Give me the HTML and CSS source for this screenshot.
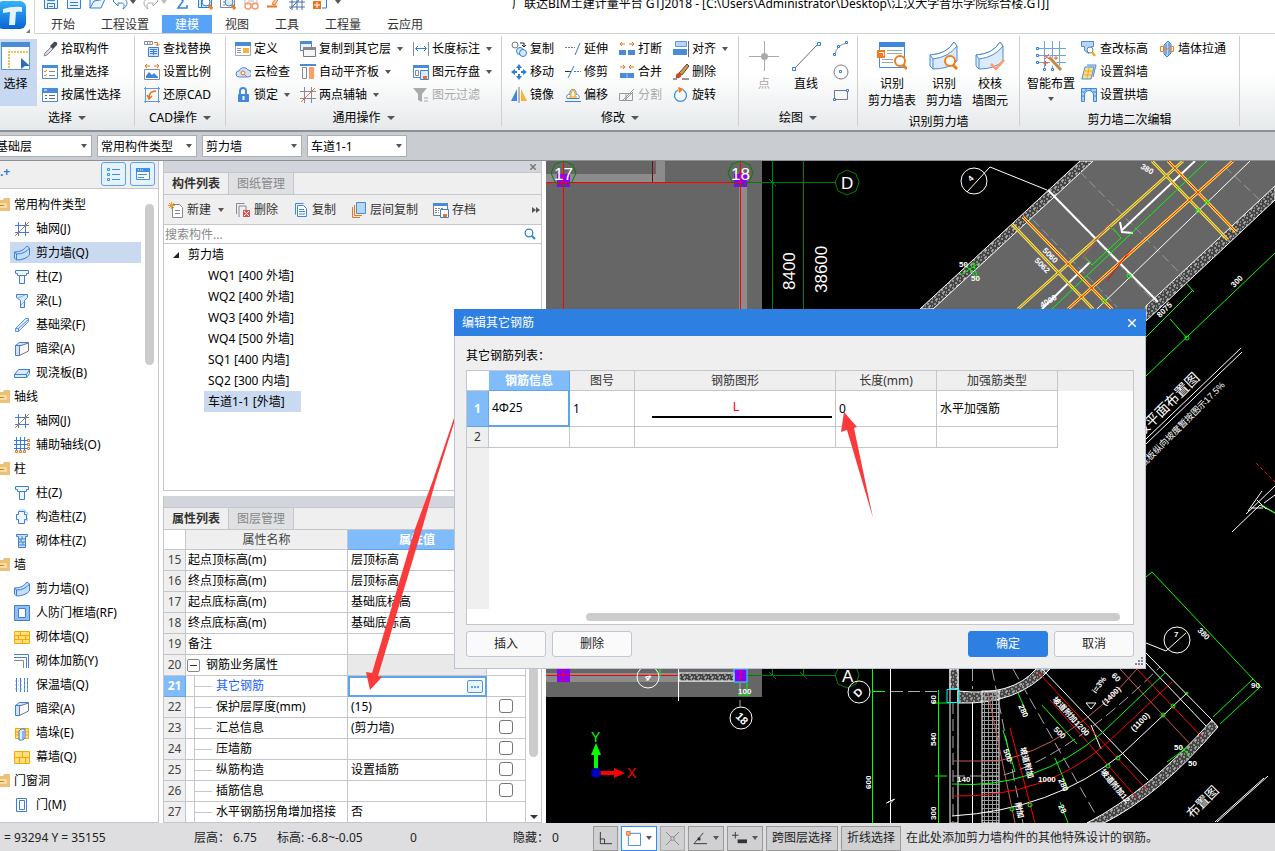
FILE: index.html
```html
<!doctype html>
<html lang="zh-CN">
<head>
<meta charset="utf-8">
<meta name="viewport" content="width=device-width, initial-scale=1">
<title>广联达BIM土建计量平台 GTJ2018</title>
<link rel="stylesheet" href="styles.css">
</head>
<body>

<!-- Icon sprite -->
<svg class="sprite" aria-hidden="true">
  <defs>
    <linearGradient id="logoFill" x1="0" y1="0" x2="0" y2="1"><stop offset="0" stop-color="#35b4f5"/><stop offset="1" stop-color="#0a63d6"/></linearGradient>
    <pattern id="stipple" width="7" height="7" patternUnits="userSpaceOnUse"><rect width="7" height="7" fill="#444"/><path d="M0 1h2M3 3h2M1 5h1M5 0h1M4 6h2M6 4v2" stroke="#d8d8d8"/></pattern>
    <pattern id="mesh" width="4" height="4" patternUnits="userSpaceOnUse"><path d="M0 .5h4M.5 0v4" stroke="#999"/></pattern>
  </defs>
  <symbol id="i-save" viewBox="0 0 16 16"><path d="M1.500 1.500h13v13h-13zM4.500 1.500v5h7v-5M4.500 14.500v-5h7v5M6 12.500h4" fill="#eaf3fd" stroke="#2f7fd6"/></symbol>
  <symbol id="i-page" viewBox="0 0 16 16"><path d="M1.500 1.500h9l4 4v9h-13zM4 8.500h8M4 11.500h8" fill="#eaf3fd" stroke="#2f7fd6"/></symbol>
  <symbol id="i-open" viewBox="0 0 16 16"><path d="M1 14V3h5l1 2h7M1 14l4-7 11-2-4 9z" fill="#eaf3fd" stroke="#2f7fd6"/></symbol>
  <symbol id="i-undo" viewBox="0 0 16 16"><path d="M1 7l5-5v3h4c7 0 6 7 1 10 2-4 1-6-2-6H6v3z" fill="#fff" stroke="#2f7fd6"/></symbol>
  <symbol id="i-redo" viewBox="0 0 16 16"><path d="M15 7l-5-5v3H6c-7 0-6 7-1 10-2-4-1-6 2-6h3v3z" fill="#fff" stroke="#aaa"/></symbol>
  <symbol id="i-sum" viewBox="0 0 16 16"><path d="M13 4V1H4l5 6-5 7h9v-3" fill="none" stroke="#2f7fd6" stroke-width="1.500"/></symbol>
  <symbol id="i-find" viewBox="0 0 16 16"><path d="M1.500 1.500h13v12h-13zM4.500 1v12" fill="#d9eafc" stroke="#2f7fd6"/><circle cx="9" cy="8" r="4" fill="#fff" stroke="#2f7fd6"/><path d="M12 11l3 4" stroke="#f07c1e" stroke-width="3"/></symbol>
  <symbol id="i-query" viewBox="0 0 16 16"><path d="M.5 1.500h14v12H.5zM3 5h4M3 8h2M3 11h2" fill="#fff" stroke="#7a8896"/><circle cx="9" cy="8" r="4" fill="#d9eafc" stroke="#2f7fd6"/><path d="M12 11l3 4" stroke="#f07c1e" stroke-width="3"/></symbol>
  <symbol id="i-bind" viewBox="0 0 16 16"><path d="M2 1h12v9H2zM5 4h6M5 7h6" fill="none" stroke="#bbb"/><circle cx="5" cy="12" r="3" fill="none" stroke="#f0a070" stroke-width="1.500"/><circle cx="12" cy="12" r="3" fill="none" stroke="#f0a070" stroke-width="1.500"/></symbol>
  <symbol id="i-pen" viewBox="0 0 16 16"><path d="M1 12.500h10" stroke="#e67320" stroke-width="2"/><path d="M6 10l6-9 2 1-5 9z" fill="#f9c9a0" stroke="#e67320"/></symbol>
  <symbol id="i-mesh" viewBox="0 0 16 16"><path d="M0 3h16M0 8h16M0 13h16M3 0v16M8 0v16M13 0v16M1 15L15 1" stroke="#4a6fa8"/></symbol>
  <symbol id="i-addbox" viewBox="0 0 16 16"><path d="M5 1h9.500v13H10" fill="none" stroke="#2f7fd6"/><path d="M1 7h8v8H1z" fill="#e67320"/><path d="M5 8v6M2 11h6" stroke="#fff"/></symbol>
  <symbol id="i-select" viewBox="0 0 30 30"><path d="M.5 1.500h28v27H.5z" fill="#fff" stroke="#5b95dc"/><path d="M0 1h29v5H0z" fill="#4a8bd8"/><path d="M8 27V11h20" fill="none" stroke="#f5a623" stroke-width="1.500" stroke-dasharray="2 1"/><path d="M20 17l9 8h-5l-4 3z" fill="#2f6cc0"/></symbol>
  <symbol id="i-pick" viewBox="0 0 16 16"><path d="M2 15l1-3 6-6 2 2-6 6z" fill="#d5dde5" stroke="#889"/><path d="M8 5l4-4c2-1 4 1 3 3l-4 4z" fill="#444b55"/></symbol>
  <symbol id="i-batch" viewBox="0 0 16 16"><path d="M.5 1.500h15v13H.5z" fill="#fff" stroke="#4a8bd8"/><path d="M0 1h16v3H0z" fill="#4a8bd8"/><path d="M2 7l1 1 2-2M2 11l1 1 2-2" fill="none" stroke="#f07c1e"/><path d="M7 7.500h6M7 11.500h6" stroke="#889"/></symbol>
  <symbol id="i-attr" viewBox="0 0 16 16"><path d="M.5 1.500h15v13H.5z" fill="#fff" stroke="#4a8bd8"/><path d="M0 1h16v5H0z" fill="#4a8bd8"/><path d="M2 3h3" stroke="#fff"/><path d="M3 8.500h2M3 11.500h2M7 8.500h6M7 11.500h6" stroke="#667"/></symbol>
  <symbol id="i-replace" viewBox="0 0 16 16"><path d="M.5.500h8v3h-8zM3.500.500v3M6 .5v3" fill="none" stroke="#889"/><path d="M10 1.500h3.500v3M11.500 3l2 2 2-2" fill="none" stroke="#e67320"/><path d="M4.500 6.500h10v9h-10zM6 8.500h7M6 10.500h7M6 12.500h7M9.500 8v6" fill="#cfe3fa" stroke="#3f7fd0"/></symbol>
  <symbol id="i-scale" viewBox="0 0 16 16"><path d="M1 2h5M10 2h5M3 0L1 2l2 2M13 0l2 2-2 2" fill="none" stroke="#e67320"/><path d="M.5 5.500h15v10H.5z" fill="#fff" stroke="#889"/><path d="M2 14v-2l3-4 3 3 2-2 4 4v1z" fill="#3f86dc"/></symbol>
  <symbol id="i-restore" viewBox="0 0 16 16"><path d="M0 1.500h16M0 14.500h16M1.500 0v16M14.500 0v16" stroke="#5b9ae0"/><path d="M12 4c-5 0-7 3-7 7M3 8l2 4 3-3" fill="none" stroke="#e67320" stroke-width="1.500"/></symbol>
  <symbol id="i-define" viewBox="0 0 16 16"><path d="M.5 1.500h15v13H.5z" fill="#fff" stroke="#9ab"/><path d="M0 1h16v4H0z" fill="#4a8bd8"/><path d="M2 7.500h4M2 9.500h4M2 11.500h4" stroke="#99a"/><path d="M8 7h6v5H8z" fill="#f9b233"/></symbol>
  <symbol id="i-cloud" viewBox="0 0 16 16"><path d="M4 13a3 3 0 010-6 5 5 0 019-1 3.500 3.500 0 010 7z" fill="#cfe3fa" stroke="#4a8bd8"/><circle cx="8" cy="9" r="2" fill="#fff" stroke="#e67320"/><path d="M9 10l3 3" stroke="#e67320"/></symbol>
  <symbol id="i-lock" viewBox="0 0 16 16"><path d="M5 8V4a3 3 0 016 0v4" fill="none" stroke="#4a8bd8" stroke-width="2"/><rect x="3" y="7" width="11" height="8" rx="1" fill="#3f86dc"/><path d="M8.500 9v4" stroke="#fff" stroke-width="2"/></symbol>
  <symbol id="i-copyfl" viewBox="0 0 16 16"><path d="M.5.500h11v9H.5z" fill="#eaf3fd" stroke="#4a8bd8"/><path d="M0 0h12v3H0z" fill="#4a8bd8"/><path d="M3.500 6.500h12v9h-12z" fill="#f5f5f5" stroke="#777"/><path d="M3 6h13v3H3z" fill="#888"/></symbol>
  <symbol id="i-flat" viewBox="0 0 16 16"><path d="M0 1h16" stroke="#4a8bd8" stroke-width="2"/><path d="M2.500 3.500h4v11h-4z" fill="#fff" stroke="#889"/><path d="M9 3h5v12H9z" fill="#ff9c6a"/></symbol>
  <symbol id="i-axis" viewBox="0 0 16 16"><path d="M0 4.500h16M0 11.500h16M4.500 0v16M11.500 0v16" stroke="#889"/><path d="M1 15L15 1" stroke="#e67320"/></symbol>
  <symbol id="i-len" viewBox="0 0 16 16"><path d="M.5 1v14M15.500 1v14" stroke="#889"/><path d="M3 7.500h10M5 5L2.500 7.500 5 10M11 5l2.500 2.500L11 10" fill="none" stroke="#2f7fd6"/></symbol>
  <symbol id="i-store" viewBox="0 0 16 16"><path d="M.5 1.500h15v12H.5z" fill="#fff" stroke="#4a8bd8"/><path d="M0 1h16v3H0z" fill="#4a8bd8"/><path d="M2.500 6.500h3v5h-3z" fill="none" stroke="#889"/><path d="M7.500 6.500h8v9h-8z" fill="#d9eafc" stroke="#3f7fd0"/><path d="M10 12h4v3h-4z" fill="#e67320"/></symbol>
  <symbol id="i-filter" viewBox="0 0 16 16"><path d="M0 1h14L9 7v8l-4-2V7z" fill="#aaa"/><path d="M11 11h4M11 14h4" stroke="#aaa"/></symbol>
  <symbol id="i-copy" viewBox="0 0 16 16"><circle cx="4" cy="4" r="3" fill="#fff" stroke="#777"/><path d="M9 2h4v3M11 4l2 2 2-2" fill="none" stroke="#222"/><circle cx="9" cy="10" r="3.500" fill="#d9eafc" stroke="#2f7fd6"/><circle cx="12" cy="12" r="3.500" fill="#d9eafc" stroke="#2f7fd6"/></symbol>
  <symbol id="i-move" viewBox="0 0 16 16"><path d="M8 0l3 4H9v2H7V4H5zM8 16l3-4H9v-2H7v2H5zM0 8l4-3v2h2v2H4v2zM16 8l-4-3v2h-2v2h2v2z" fill="#2f7fd6"/></symbol>
  <symbol id="i-mirror" viewBox="0 0 16 16"><path d="M6 2v12H0z" fill="#3f86dc"/><path d="M10 2v12h6z" fill="#f9b233"/><path d="M8 0v16" stroke="#777"/></symbol>
  <symbol id="i-extend" viewBox="0 0 16 16"><path d="M0 6.500h10" stroke="#778" stroke-dasharray="2 1"/><path d="M15 2l-5 12" stroke="#2f7fd6"/></symbol>
  <symbol id="i-trim" viewBox="0 0 16 16"><path d="M0 7.500h6" stroke="#333"/><path d="M9 7.500h7" stroke="#2f7fd6" stroke-dasharray="2 1"/><path d="M9 2L3 14" stroke="#2f7fd6"/></symbol>
  <symbol id="i-offset" viewBox="0 0 16 16"><path d="M0 14.500h16M2 11.500h12c1-3-2-5-3-4 1-7-7-7-6 0-2-1-4 1-3 4z" fill="#fff" stroke="#3f7fd0"/><path d="M4 10h8M6 10c-1-3 1-7 2-7s3 3 2 7" fill="none" stroke="#f9b233" stroke-width="1.500"/></symbol>
  <symbol id="i-break" viewBox="0 0 16 16"><path d="M0 9h7v5H0zM9 9h7v5H9z" fill="#4a8bd8"/><path d="M1 3h5M10 3h5M3 1L1 3l2 2M13 1l2 2-2 2" fill="none" stroke="#e67320"/></symbol>
  <symbol id="i-merge" viewBox="0 0 16 16"><path d="M1 9h14v5H1z" fill="#4a8bd8"/><path d="M8 9v5" stroke="#9cc4f2"/><path d="M1 3h5M10 3h5M4 1l2 2-2 2M12 1l-2 2 2 2" fill="none" stroke="#e67320"/></symbol>
  <symbol id="i-split" viewBox="0 0 16 16"><path d="M.5 6.500h13v7H.5zM7 6v8M3 14L15 2M5 14l9-9" fill="none" stroke="#999"/></symbol>
  <symbol id="i-align" viewBox="0 0 16 16"><path d="M2.500.500h11v5h-11z" fill="#b9d6f7" stroke="#5b9ae0"/><path d="M0 8h14v6H0z" fill="#4a8bd8"/><path d="M15.500 0v16" stroke="#667"/></symbol>
  <symbol id="i-erase" viewBox="0 0 16 16"><path d="M6 9l8-9 2 2-7 9z" fill="#c79a58" stroke="#6b4a20"/><path d="M3 12c0-3 3-4 5-2 1 3-2 5-5 4z" fill="#d2481c"/><path d="M0 15h4M9 15h7" stroke="#333"/></symbol>
  <symbol id="i-rotate" viewBox="0 0 16 16"><path d="M10 3a6 6 0 11-5 0" fill="none" stroke="#3f8fe0" stroke-width="1.300"/><path d="M5 0l6 2-5 4z" fill="#f07c1e"/></symbol>
  <symbol id="i-point" viewBox="0 0 30 30"><path d="M15.500 0v30M0 15.500h30" stroke="#aaa"/><circle cx="15.500" cy="15.500" r="3.500" fill="#aaa"/></symbol>
  <symbol id="i-line" viewBox="0 0 30 30"><path d="M4 27L26 4" stroke="#667"/><path d="M1.500 26.500h3v3h-3zM26.500 1.500h3v3h-3z" fill="#fff" stroke="#2f7fd6"/></symbol>
  <symbol id="i-arc" viewBox="0 0 16 16"><path d="M2 14Q3 4 14 2" fill="none" stroke="#889"/><path d="M.5 12.500h2v2h-2zM12.500.500h2v2h-2zM4.500 4.500h2v2h-2z" fill="#fff" stroke="#2f7fd6"/></symbol>
  <symbol id="i-circle" viewBox="0 0 16 16"><circle cx="8" cy="8" r="7" fill="none" stroke="#778"/><path d="M6.500 6.500h2v2h-2z" fill="#fff" stroke="#2f7fd6"/></symbol>
  <symbol id="i-rect" viewBox="0 0 16 16"><path d="M1.500 3.500h13v9h-13z" fill="none" stroke="#778"/><path d="M.5 11.500h2v2h-2zM13.500 2.500h2v2h-2z" fill="#fff" stroke="#2f7fd6"/></symbol>
  <symbol id="i-idtable" viewBox="0 0 30 30"><path d="M2.500 1.500h25v25h-25z" fill="#fff" stroke="#4a8bd8"/><path d="M2 1h26v5H2z" fill="#3f86dc"/><path d="M10 9.500h15M10 12.500h15M5 18.500h11M5 21.500h11" stroke="#9aa"/><path d="M0 9h8v8H0z" fill="#f07c1e"/><path d="M2 11.500h4.500V15" fill="none" stroke="#fff"/><circle cx="23" cy="20" r="5" fill="#fff" stroke="#f07c1e" stroke-width="2"/><path d="M26 24l4 4" stroke="#f07c1e" stroke-width="3"/></symbol>
  <symbol id="i-wallbig" viewBox="0 0 30 30"><path d="M1 14Q18 13 25 1l3 4v15Q20 28 4 28l-3-3z" fill="#dcebfb" stroke="#4a8bd8"/><path d="M1 14l3 4Q20 16 28 5L25 1Q18 13 1 14z" fill="#fff" stroke="#4a8bd8"/><path d="M4 18v10" stroke="#4a8bd8"/></symbol>
  <symbol id="i-smart" viewBox="0 0 30 30"><path d="M0 7.500h30M0 14.500h30M0 21.500h30M8.500 0v29M16.500 0v29M23.500 0v29" stroke="#6aa2e4"/><path d="M.5 6.500h2v2h-2zM.5 13.500h2v2h-2zM.5 20.500h2v2h-2zM7.500 27.500h2v2h-2zM15.500 27.500h2v2h-2z" fill="#fff" stroke="#2f7fd6"/><path d="M12 16l13 14" stroke="#fff" stroke-width="5"/><path d="M13 16l12 13" stroke="#c98845" stroke-width="3"/><path d="M7 22h5M9.500 20v5M18 17h4M20 15v4M8 14l5 4M13 13l-4 5" stroke="#f0582a"/></symbol>
  <symbol id="i-chkh" viewBox="0 0 16 16"><path d="M.5.500h12v5h-2v4l-3 3-4-3v-4h-3z" fill="#b9d6f7" stroke="#4a8bd8"/><circle cx="9" cy="9" r="3" fill="#fff" stroke="#5b7fb0"/><path d="M11 11l3 4" stroke="#f5a623" stroke-width="2.500"/></symbol>
  <symbol id="i-slope" viewBox="0 0 16 16"><path d="M6 1h9l-3 12" fill="#cfe3fa" stroke="#4a8bd8"/><path d="M4 3h9l-3 12H.8z" fill="#ffe08a" stroke="#4a8bd8"/><path d="M4 7h7M3 11h7M8 4L6 14" stroke="#f5a623"/></symbol>
  <symbol id="i-arch" viewBox="0 0 16 16"><path d="M.5 1.500h15v13h-3V8a4.500 4.500 0 00-9 0v6.500h-3z" fill="#a9cff7" stroke="#3f86dc"/><path d="M0 5h4M12 5h4M0 9h4M12 9h4M5 1v3M10 1v3" stroke="#3f86dc"/></symbol>
  <symbol id="i-pull" viewBox="0 0 16 16"><path d="M5 4l4-4 3 3v9l-4 4-3-3z" fill="#b9d6f7" stroke="#3f7fd0"/><path d="M7 3v11M10 2v12" stroke="#3f7fd0"/><path d="M1.500 5.500h3v5h-3zM11.500 5.500h3v5h-3zM4 8h8" fill="none" stroke="#f07c1e"/></symbol>

  <symbol id="t-folder" viewBox="0 0 16 16"><path d="M0 3h9l1-2h6v13H0z" fill="#edc078"/><path d="M0 6h13v5H0z" fill="#f8dca8"/><path d="M4 8.500h6" stroke="#c98d2e"/></symbol>
  <symbol id="t-grid" viewBox="0 0 16 16"><path d="M1 4.500h14M1 11.500h14M4.500 1v14M11.500 1v14" stroke="#3f7fd0"/><path d="M1 15L15 1" stroke="#e67320"/></symbol>
  <symbol id="t-aux" viewBox="0 0 16 16"><path d="M0 3.500h13M0 7.500h13M0 11.500h13M2.500 0v13M6.500 0v13M10.500 0v13" stroke="#2f7fd6"/><path d="M1.500 13.500h2v2h-2zM5.500 13.500h2v2h-2zM9.500 13.500h2v2h-2zM13.500 2.500h2v2h-2zM13.500 6.500h2v2h-2zM13.500 10.500h2v2h-2z" fill="#fff" stroke="#e67320"/></symbol>
  <symbol id="t-wall" viewBox="0 0 16 16"><path d="M.5 7Q9 7 13 1l2.500 2v7Q11 15 2.500 15L.5 13z" fill="#c5defb" stroke="#3f7fd0"/><path d="M.5 7l2 2Q11 9 15.500 3M2.500 9v6" fill="none" stroke="#3f7fd0"/></symbol>
  <symbol id="t-col" viewBox="0 0 16 16"><path d="M1.500 1.500h13v3h-2v2h-9v-2h-2zM5.500 6.500h5v8h-5z" fill="#eef5fd" stroke="#3f7fd0"/></symbol>
  <symbol id="t-beam" viewBox="0 0 16 16"><path d="M2.500 1.500h11v3l-3 3v7h-4v-7l-4-3z" fill="#dcebfb" stroke="#3f7fd0"/><path d="M4 5l7-3M7 12l3-3" stroke="#7fb0e8"/></symbol>
  <symbol id="t-fbeam" viewBox="0 0 16 16"><path d="M1.500 11.500l10-10h3v3l-10 10h-3z" fill="#dcebfb" stroke="#5b95dc"/><path d="M1.500 11.500h3v3M4.500 11.500l10-9" fill="none" stroke="#5b95dc"/></symbol>
  <symbol id="t-hbeam" viewBox="0 0 16 16"><path d="M1.500 4.500l4-3h9l-4 3zM1.500 4.500h4v10h-4z" fill="#cfe3fa" stroke="#3f7fd0"/><path d="M5.500 5l9-3v8l-9 4.500z" fill="#f7f9fb" stroke="#778"/></symbol>
  <symbol id="t-slab" viewBox="0 0 16 16"><path d="M.5 9.500l4-5h11l-3 5zM.5 9.500v3h12v-3M12.500 12.500l3-4v-4" fill="#dcebfb" stroke="#3f7fd0"/></symbol>
  <symbol id="t-ccol" viewBox="0 0 16 16"><path d="M5.500 3.500V1h6v2.500h2v3M13.500 9v3h-3" fill="none" stroke="#a9cff7"/><path d="M4.500 2.500h6v3h2v5h-2v4h-6v-4h-2v-5h2z" fill="#eef5fd" stroke="#3f7fd0"/></symbol>
  <symbol id="t-bcol" viewBox="0 0 16 16"><path d="M2.500 1.500h11v2h-2v11h-7v-11h-2zM5 6h7M5 9h7M5 12h7M8 3v3M7 6v3M9 9v3" fill="#cfe3fa" stroke="#3f7fd0"/></symbol>
  <symbol id="t-frame" viewBox="0 0 16 16"><path d="M.5.500h15v15H.5z" fill="#8ec0f5" stroke="#3f7fd0"/><path d="M4.500 3.500h7v9h-7z" fill="#fff" stroke="#3f7fd0"/></symbol>
  <symbol id="t-brick" viewBox="0 0 16 16"><path d="M.5 2.500h15v12H.5zM0 6.500h16M0 10.500h16M6.500 2v4M11.500 6v4M4.500 6v4M8.500 10v4" fill="#ffdf80" stroke="#f5a800"/></symbol>
  <symbol id="t-curtain" viewBox="0 0 16 16"><path d="M.5 2.500h15v12H.5zM0 8.500h16M8.500 2v6M5.500 8v6M11.500 8v6" fill="#ffdf80" stroke="#f5a800"/></symbol>
  <symbol id="t-bar" viewBox="0 0 16 16"><path d="M0 1.500h14.500V15M0 4.500h12.500V15" fill="none" stroke="#4a7fc0"/><path d="M0 7.500h9.500V15" fill="none" stroke="#888"/></symbol>
  <symbol id="t-insul" viewBox="0 0 16 16"><path d="M2.500 1v14M6.500 1v14M10.500 1v14M13.500 1v14" stroke="#3f7fd0"/><path d="M1 4h14M1 8h14M1 12h14" stroke="#8ab8ee" stroke-dasharray="1 2"/></symbol>
  <symbol id="t-pier" viewBox="0 0 16 16"><path d="M1.500 3.500h13v10h-13zM1 7h14M1 10h14" fill="#ffdf80" stroke="#f5a800"/><path d="M5 6l2-2h4v9l-2 2H5zM9 6v8" fill="#dcebfb" stroke="#3f7fd0"/></symbol>
  <symbol id="t-door" viewBox="0 0 16 16"><path d="M2.500 1.500h10v13h-10zM5.500 3.500h5v9h-5z" fill="#fff" stroke="#3f7fd0"/></symbol>

  <symbol id="p-new" viewBox="0 0 16 16"><path d="M4.500 2.500h7l3 3v10h-10zM7 8.500h5M7 11.500h5" fill="#fff" stroke="#889"/><path d="M1 1l5 5M6 1L1 6M3.500 0v7M0 3.500h7" stroke="#f09a20"/></symbol>
  <symbol id="p-del" viewBox="0 0 16 16"><path d="M1.500 12V1.500h8M4 15V4h7v4" fill="none" stroke="#889"/><path d="M8 8h7v7H8z" fill="#d9534f"/><path d="M9 9l5 5M14 9l-5 5" stroke="#fff"/></symbol>
  <symbol id="p-copy" viewBox="0 0 16 16"><path d="M2.500 12.500v-11h8" fill="none" stroke="#3f86dc"/><path d="M4.500 3.500h6l3 3v8h-9zM6 7.500h5M6 9.500h6M6 12h6" fill="#fff" stroke="#3f86dc"/></symbol>
  <symbol id="p-layer" viewBox="0 0 16 16"><path d="M5.500.500h9v11h-9z" fill="#b9d6f7" stroke="#4a8bd8"/><path d="M3.500 3v10.500H11M1.500 5v10.500H9" fill="none" stroke="#e67320"/></symbol>
  <symbol id="p-arch" viewBox="0 0 16 16"><path d="M.5 1.500h14v12H.5z" fill="#fff" stroke="#778"/><path d="M0 1h15v3H0z" fill="#4a8bd8"/><path d="M2 6.500h9M2 8.500h4M2 10.500h4" stroke="#889" stroke-dasharray="2 1"/><path d="M7.500 7.500h8v8h-8z" fill="#fff" stroke="#3f7fd0"/><path d="M10 12h4v3h-4z" fill="#e67320"/></symbol>
  <symbol id="p-search" viewBox="0 0 12 12"><circle cx="5" cy="5" r="3.800" fill="none" stroke="#2a86c8" stroke-width="1.300"/><path d="M8 8l3 3" stroke="#2a86c8" stroke-width="2"/></symbol>
  <symbol id="v-list" viewBox="0 0 16 16"><path d="M1.500 2.500h2v2h-2zM1.500 7.500h2v2h-2zM1.500 12.500h2v2h-2z" fill="none" stroke="#3f8fe8"/><path d="M6 3.500h8M6 8.500h8M6 13.500h8" stroke="#3f8fe8"/></symbol>
  <symbol id="v-card" viewBox="0 0 16 16"><path d="M1.500 2.500h13v11h-13z" fill="#fff" stroke="#3f8fe8"/><path d="M1 2h14v4H1z" fill="#3f8fe8"/><path d="M3 4h6" stroke="#fff" stroke-dasharray="1 1"/><path d="M3 8.500h9M3 11.500h6" stroke="#3f8fe8"/></symbol>

  <symbol id="s-ortho" viewBox="0 0 16 16"><path d="M2.500 1v12.500H15M2 8.500h5v5" fill="none" stroke="#333"/></symbol>
  <symbol id="s-box" viewBox="0 0 16 16"><path d="M2.500 2.500h13v13h-13z" fill="#fff" stroke="#3f86dc"/><path d="M.5.500h4v4h-4z" fill="#f9b28a" stroke="#e67320"/></symbol>
  <symbol id="s-cross" viewBox="0 0 16 16"><path d="M1 1l14 14M15 1L1 15" stroke="#888"/><circle cx="8" cy="8" r="2" fill="#ccc" stroke="#888"/></symbol>
  <symbol id="s-angle" viewBox="0 0 16 16"><path d="M15 13.500H1L11 2" fill="none" stroke="#333"/><path d="M5 7h3v3H5z" fill="#333"/></symbol>
  <symbol id="s-dyn" viewBox="0 0 16 16"><path d="M3.500 1v7M0 4.500h7" stroke="#333"/><path d="M6 9h10v4H6z" fill="#333"/></symbol>
</svg>

<header class="top">
  <div class="logo">
    <svg width="26" height="28" viewBox="0 0 26 28"><rect x="-3" width="29" height="28" rx="6" fill="url(#logoFill)"/><path d="M3 8q9-3 19-2v5q-3-1-6 0l-1 13H9l1-13-7 1z" fill="#e4f4ff"/></svg>
    <i class="corner"></i>
  </div>
  <div class="top-main">
    <div class="titlebar">
      <div class="quick">
        <svg class="ic"><use href="#i-save"/></svg>
        <svg class="ic"><use href="#i-page"/></svg>
        <svg class="ic"><use href="#i-open"/></svg>
        <span class="drop"><svg class="ic"><use href="#i-undo"/></svg><i class="arrow"></i></span>
        <span class="drop"><svg class="ic"><use href="#i-redo"/></svg><i class="arrow pale"></i></span>
        <svg class="ic"><use href="#i-sum"/></svg>
        <svg class="ic"><use href="#i-find"/></svg>
        <svg class="ic"><use href="#i-query"/></svg>
        <svg class="ic"><use href="#i-bind"/></svg>
        <svg class="ic"><use href="#i-pen"/></svg>
        <svg class="ic"><use href="#i-mesh"/></svg>
        <svg class="ic"><use href="#i-addbox"/></svg>
        <i class="arrow"></i>
      </div>
      <div class="title">广联达BIM土建计量平台 GTJ2018 - [C:\Users\Administrator\Desktop\江汉大学音乐学院综合楼.GTJ]</div>
    </div>
    <nav class="tabs">
      <button>开始</button>
      <button>工程设置</button>
      <button class="active">建模</button>
      <button>视图</button>
      <button>工具</button>
      <button>工程量</button>
      <button>云应用</button>
    </nav>
  </div>
</header>

<section class="ribbon">
  <div class="group g-select">
    <div class="cmds">
      <button class="big on"><svg class="ic30"><use href="#i-select"/></svg>选择</button>
      <div class="col">
        <button><svg class="ic"><use href="#i-pick"/></svg>拾取构件</button>
        <button><svg class="ic"><use href="#i-batch"/></svg>批量选择</button>
        <button><svg class="ic"><use href="#i-attr"/></svg>按属性选择</button>
      </div>
    </div>
    <div class="caption">选择<i class="arrow"></i></div>
  </div>
  <div class="group g-cad">
    <div class="cmds">
      <div class="col">
        <button><svg class="ic"><use href="#i-replace"/></svg>查找替换</button>
        <button><svg class="ic"><use href="#i-scale"/></svg>设置比例</button>
        <button><svg class="ic"><use href="#i-restore"/></svg>还原CAD</button>
      </div>
    </div>
    <div class="caption">CAD操作<i class="arrow"></i></div>
  </div>
  <div class="group g-common">
    <div class="cmds">
      <div class="col">
        <button><svg class="ic"><use href="#i-define"/></svg>定义</button>
        <button><svg class="ic"><use href="#i-cloud"/></svg>云检查</button>
        <button><svg class="ic"><use href="#i-lock"/></svg>锁定<i class="arrow"></i></button>
      </div>
      <div class="col">
        <button><svg class="ic"><use href="#i-copyfl"/></svg>复制到其它层<i class="arrow"></i></button>
        <button><svg class="ic"><use href="#i-flat"/></svg>自动平齐板<i class="arrow"></i></button>
        <button><svg class="ic"><use href="#i-axis"/></svg>两点辅轴<i class="arrow"></i></button>
      </div>
      <div class="col">
        <button><svg class="ic"><use href="#i-len"/></svg>长度标注<i class="arrow"></i></button>
        <button><svg class="ic"><use href="#i-store"/></svg>图元存盘<i class="arrow"></i></button>
        <button disabled><svg class="ic"><use href="#i-filter"/></svg>图元过滤</button>
      </div>
    </div>
    <div class="caption">通用操作<i class="arrow"></i></div>
  </div>
  <div class="group g-modify">
    <div class="cmds">
      <div class="col">
        <button><svg class="ic"><use href="#i-copy"/></svg>复制</button>
        <button><svg class="ic"><use href="#i-move"/></svg>移动</button>
        <button><svg class="ic"><use href="#i-mirror"/></svg>镜像</button>
      </div>
      <div class="col">
        <button><svg class="ic"><use href="#i-extend"/></svg>延伸</button>
        <button><svg class="ic"><use href="#i-trim"/></svg>修剪</button>
        <button><svg class="ic"><use href="#i-offset"/></svg>偏移</button>
      </div>
      <div class="col">
        <button><svg class="ic"><use href="#i-break"/></svg>打断</button>
        <button><svg class="ic"><use href="#i-merge"/></svg>合并</button>
        <button disabled><svg class="ic"><use href="#i-split"/></svg>分割</button>
      </div>
      <div class="col">
        <button><svg class="ic"><use href="#i-align"/></svg>对齐<i class="arrow"></i></button>
        <button><svg class="ic"><use href="#i-erase"/></svg>删除</button>
        <button><svg class="ic"><use href="#i-rotate"/></svg>旋转</button>
      </div>
    </div>
    <div class="caption">修改<i class="arrow"></i></div>
  </div>
  <div class="group g-draw">
    <div class="cmds">
      <button class="big" disabled><svg class="ic30"><use href="#i-point"/></svg>点</button>
      <button class="big"><svg class="ic30"><use href="#i-line"/></svg>直线</button>
      <div class="col">
        <button aria-label="弧"><svg class="ic"><use href="#i-arc"/></svg></button>
        <button aria-label="圆"><svg class="ic"><use href="#i-circle"/></svg></button>
        <button aria-label="矩形"><svg class="ic"><use href="#i-rect"/></svg></button>
      </div>
    </div>
    <div class="caption">绘图<i class="arrow"></i></div>
  </div>
  <div class="group g-ident low">
    <div class="cmds">
      <button class="big"><svg class="ic30"><use href="#i-idtable"/></svg>识别<br>剪力墙表</button>
      <button class="big"><svg class="ic30" viewBox="0 0 30 30"><use href="#i-wallbig"/><circle cx="21" cy="20" r="5" fill="#fff" stroke="#f07c1e" stroke-width="2"/><path d="M24 24l4 4" stroke="#f07c1e" stroke-width="3"/></svg>识别<br>剪力墙</button>
      <button class="big"><svg class="ic30" viewBox="0 0 30 30"><use href="#i-wallbig"/><path d="M16 23l5 5 8-9" fill="none" stroke="#ff9c6a" stroke-width="2.500"/></svg>校核<br>墙图元</button>
    </div>
    <div class="caption">识别剪力墙</div>
  </div>
  <div class="group g-second low">
    <div class="cmds">
      <button class="big"><svg class="ic30"><use href="#i-smart"/></svg>智能布置<i class="arrow"></i></button>
      <div class="col">
        <button><svg class="ic"><use href="#i-chkh"/></svg>查改标高</button>
        <button><svg class="ic"><use href="#i-slope"/></svg>设置斜墙</button>
        <button><svg class="ic"><use href="#i-arch"/></svg>设置拱墙</button>
      </div>
      <div class="col">
        <button><svg class="ic"><use href="#i-pull"/></svg>墙体拉通</button>
      </div>
    </div>
    <div class="caption">剪力墙二次编辑</div>
  </div>
</section>

<div class="pickers">
  <select aria-label="楼层"><option>基础层</option></select>
  <select aria-label="构件类型"><option>常用构件类型</option></select>
  <select aria-label="构件"><option>剪力墙</option></select>
  <select aria-label="名称"><option>车道1-1</option></select>
</div>

<main class="work">
  <aside class="nav">
    <div class="nav-head">
      <span class="plus">.+</span>
      <button aria-label="列表"><svg class="ic"><use href="#v-list"/></svg></button>
      <button aria-label="卡片"><svg class="ic"><use href="#v-card"/></svg></button>
    </div>
    <ul class="types">
      <li class="cat"><svg class="ic"><use href="#t-folder"/></svg>常用构件类型</li>
      <li><svg class="ic"><use href="#t-grid"/></svg>轴网(J)</li>
      <li class="on"><svg class="ic"><use href="#t-wall"/></svg>剪力墙(Q)</li>
      <li><svg class="ic"><use href="#t-col"/></svg>柱(Z)</li>
      <li><svg class="ic"><use href="#t-beam"/></svg>梁(L)</li>
      <li><svg class="ic"><use href="#t-fbeam"/></svg>基础梁(F)</li>
      <li><svg class="ic"><use href="#t-hbeam"/></svg>暗梁(A)</li>
      <li><svg class="ic"><use href="#t-slab"/></svg>现浇板(B)</li>
      <li class="cat"><svg class="ic"><use href="#t-folder"/></svg>轴线</li>
      <li><svg class="ic"><use href="#t-grid"/></svg>轴网(J)</li>
      <li><svg class="ic"><use href="#t-aux"/></svg>辅助轴线(O)</li>
      <li class="cat"><svg class="ic"><use href="#t-folder"/></svg>柱</li>
      <li><svg class="ic"><use href="#t-col"/></svg>柱(Z)</li>
      <li><svg class="ic"><use href="#t-ccol"/></svg>构造柱(Z)</li>
      <li><svg class="ic"><use href="#t-bcol"/></svg>砌体柱(Z)</li>
      <li class="cat"><svg class="ic"><use href="#t-folder"/></svg>墙</li>
      <li><svg class="ic"><use href="#t-wall"/></svg>剪力墙(Q)</li>
      <li><svg class="ic"><use href="#t-frame"/></svg>人防门框墙(RF)</li>
      <li><svg class="ic"><use href="#t-brick"/></svg>砌体墙(Q)</li>
      <li><svg class="ic"><use href="#t-bar"/></svg>砌体加筋(Y)</li>
      <li><svg class="ic"><use href="#t-insul"/></svg>保温墙(Q)</li>
      <li><svg class="ic"><use href="#t-hbeam"/></svg>暗梁(A)</li>
      <li><svg class="ic"><use href="#t-pier"/></svg>墙垛(E)</li>
      <li><svg class="ic"><use href="#t-curtain"/></svg>幕墙(Q)</li>
      <li class="cat"><svg class="ic"><use href="#t-folder"/></svg>门窗洞</li>
      <li><svg class="ic"><use href="#t-door"/></svg>门(M)</li>
    </ul>
    <i class="thumb"></i>
  </aside>

  <div class="middle">
    <section class="panel list">
      <div class="grip"><button aria-label="关闭"><svg width="6" height="6" viewBox="0 0 6 6"><path d="M0 0l6 6M6 0L0 6" stroke="#777" stroke-width="1.500"/></svg></button></div>
      <div class="ptabs"><button class="active">构件列表</button><button>图纸管理</button></div>
      <div class="ptools">
        <button><svg class="ic"><use href="#p-new"/></svg>新建<i class="arrow"></i></button>
        <button><svg class="ic"><use href="#p-del"/></svg>删除</button>
        <button><svg class="ic"><use href="#p-copy"/></svg>复制</button>
        <button><svg class="ic"><use href="#p-layer"/></svg>层间复制</button>
        <button><svg class="ic"><use href="#p-arch"/></svg>存档</button>
        <span class="more"><i></i><i></i></span>
      </div>
      <div class="search"><input type="text" placeholder="搜索构件..." aria-label="搜索构件"><svg width="12" height="12"><use href="#p-search"/></svg></div>
      <ul class="members">
        <li class="root"><i class="fold"></i>剪力墙</li>
        <li><span>WQ1 [400 外墙]</span></li>
        <li><span>WQ2 [400 外墙]</span></li>
        <li><span>WQ3 [400 外墙]</span></li>
        <li><span>WQ4 [500 外墙]</span></li>
        <li><span>SQ1 [400 内墙]</span></li>
        <li><span>SQ2 [300 内墙]</span></li>
        <li><span class="on">车道1-1 [外墙]</span></li>
      </ul>
    </section>

    <section class="panel props">
      <div class="grip"></div>
      <div class="ptabs"><button class="active">属性列表</button><button>图层管理</button></div>
      <div class="prop-body">
        <table class="ptable">
          <colgroup><col class="c-no"><col class="c-name"><col class="c-val"><col class="c-chk"></colgroup>
          <thead><tr><th class="blank"></th><th>属性名称</th><th class="hot">属性值</th><th></th></tr></thead>
          <tbody>
            <tr><th>15</th><td>起点顶标高(m)</td><td>层顶标高</td><td></td></tr>
            <tr><th>16</th><td>终点顶标高(m)</td><td>层顶标高</td><td></td></tr>
            <tr><th>17</th><td>起点底标高(m)</td><td>基础底标高</td><td></td></tr>
            <tr><th>18</th><td>终点底标高(m)</td><td>基础底标高</td><td></td></tr>
            <tr><th>19</th><td>备注</td><td></td><td></td></tr>
            <tr class="sect"><th>20</th><td><button class="minus" aria-label="收起"></button>钢筋业务属性</td><td></td><td></td></tr>
            <tr class="sub cur"><th>21</th><td>其它钢筋</td><td class="edit"><div><input type="text" aria-label="其它钢筋"><button aria-label="编辑"><i></i><i></i><i></i></button></div></td><td></td></tr>
            <tr class="sub"><th>22</th><td>保护层厚度(mm)</td><td>(15)</td><td><input type="checkbox" aria-label="保护层厚度"></td></tr>
            <tr class="sub"><th>23</th><td>汇总信息</td><td>(剪力墙)</td><td><input type="checkbox" aria-label="汇总信息"></td></tr>
            <tr class="sub"><th>24</th><td>压墙筋</td><td></td><td><input type="checkbox" aria-label="压墙筋"></td></tr>
            <tr class="sub"><th>25</th><td>纵筋构造</td><td>设置插筋</td><td><input type="checkbox" aria-label="纵筋构造"></td></tr>
            <tr class="sub"><th>26</th><td>插筋信息</td><td></td><td><input type="checkbox" aria-label="插筋信息"></td></tr>
            <tr class="sub"><th>27</th><td>水平钢筋拐角增加搭接</td><td>否</td><td></td></tr>
          </tbody>
        </table>
        <div class="vbar"><i class="vthumb"></i><i class="arrow dark"></i></div>
      </div>
    </section>
  </div>

  <!-- Drawing area -->
  <svg class="canvas" viewBox="546 161 729 662" preserveAspectRatio="xMinYMin slice">
    <rect x="546" y="161" width="729" height="662"/>
    <rect x="546" y="161" width="216" height="536" fill="#666"/>
    <path d="M546 174h110v-13h9v21H546zM739 182h8v500h-8zM546 673h201v9H546z" fill="#8c8c8c"/>
    <path d="M652.500 161v21" stroke="#7c0808"/>
    <path d="M557 174h13v13h-13zM734 174h13v13h-13zM557 669h13v13h-13zM734 669h13v13h-13z" fill="#8a00ff"/>
    <path d="M546 182.500h194M563.500 161v521M740.500 161v521M546 675.500h188" stroke="#f00" fill="none"/>
    <g fill="none" stroke="#008000">
      <path d="M747 182.500h89M772.500 161v515M803.500 161v515M747 675.500h89M769 179l7 7M769 672l7 7M800 672l7 7"/>
      <path d="M551 173l4-9 9-3 9 4 3 8-4 9-8 4-9-4zM728 173l4-9 9-3 9 4 3 8-4 9-8 4-9-4zM835 182l4-8 8-4 9 4 3 8-3 9-9 4-9-4zM835 675l4-8 8-4 9 4 3 8-3 9-9 4-9-4z"/>
    </g>
    <g class="cad" font-size="17">
      <text x="554" y="180">17</text><text x="731" y="180">18</text>
      <text x="841" y="189">D</text><text x="842" y="682">A</text>
      <text transform="translate(795 290) rotate(-90)">8400</text>
      <text transform="translate(827 293) rotate(-90)">38600</text>
    </g>

    <!-- Upper ramp -->
    <path d="M920 309L1080 161H1275V195L1146 320z" fill="#666"/>
    <path d="M920 309L1080 161h13L933 309zM1275 186v14L1146 321v-15z" fill="url(#stipple)" stroke="#fff"/>
    <g fill="none" stroke="#999" stroke-dasharray="9 4">
      <path d="M1080 172l107 108M1033 220l84 87M1225 167l37 35M1054 197l102 106"/>
    </g>
    <g fill="none" stroke="#fff">
      <path d="M1048 190l110 112M1195 161l-73 69M1120 222l2 10 11 1M1090 262l-48 47" stroke-width="2"/>
      <path d="M1250 161L1097 309M967 192l23-25 57 23M1241 348l-95 91M1242 352l-96 92"/>
      <circle cx="974" cy="181" r="13"/>
    </g>
    <g fill="none" stroke="#ffe14a" stroke-width="3"><path d="M1018 309l165-148M1012 224l81 85M1152 161l76 79M1023 217l89 92M1068 309l165-148M1168 161l68 71"/></g>
    <g fill="none" stroke="#8a7430"><path d="M1018 309l165-148M1012 224l81 85M1152 161l76 79"/></g>
    <g fill="none" stroke="#f00"><path d="M1023 217l89 92M1068 309l165-148M1168 161l68 71M1107 281l24-32"/></g>
    <path d="M1083 257l25-32 7 7M1083 257l9 8" fill="none" stroke="#c65b5b"/>
    <g fill="none" stroke="#0f0">
      <path d="M1207 161l-155 148M1113 228l8 10-29 27-7-8M1275 253l-129 123M1193 290l-47 47M1187 284l7 8M1170 319l17 19M961 275l18-12M964 263l12 14M973 262l4 14"/>
      <circle cx="1198" cy="211" r="2"/><circle cx="1207" cy="202" r="2"/><circle cx="1129" cy="276" r="2"/><circle cx="1104" cy="301" r="2"/><circle cx="1187" cy="338" r="2"/>
    </g>
    <g class="cad bold" font-size="8">
      <text transform="translate(1042 251) rotate(45)">5060</text><text transform="translate(1034 261) rotate(45)">5062</text>
      <text transform="translate(1042 308) rotate(-30)">4000</text><text transform="translate(1234 288) rotate(-45)">300</text>
      <text transform="translate(1160 318) rotate(-45)">8075</text><text x="959" y="267">50</text><text x="971" y="281">50</text>
      <text transform="translate(1140 168) rotate(30)">380</text><text transform="translate(971 182) rotate(-45)">4</text>
    </g>
    <g class="cad" font-size="14">
      <text transform="translate(1131 448) rotate(-45)">底板平面布置图</text>
      <text font-size="9" transform="translate(1131 480) rotate(-45)">坡道底板纵向坡度暂按图示17.5%</text>
    </g>
    <path d="M1232 532l28-27 15 8M1246 514l29-28M1248 511l14-20M1251 508h12M1257 500l9 9M1264 503l11-8" fill="none" stroke="#fff"/>
    <path d="M1256 463l19 19" stroke="#f00" stroke-dasharray="4 2"/><path d="M1262 505l13 8" stroke="#0f0"/>

    <!-- Lower ramp -->
    <g fill="url(#stipple)" stroke="#fff">
      <path d="M950 669h8v154h-8z" fill="none"/><path d="M950 669h8v20h-8zM679 673h55v8h-55zM958 691Q1012 697 1036 669h14Q1018 705 958 703z"/>
      <path d="M1087 823Q1150 790 1212 720l6 7Q1160 795 1104 823z"/>
    </g>
    <rect x="982" y="691" width="17" height="132" fill="url(#mesh)" stroke="#fff"/>
    <g fill="none" stroke="#aaa" stroke-dasharray="12 5">
      <path d="M891 691.500h49M953 702v120M972.500 669v20M992 669l31 154M1013 669l84 148M953 776h47Q1068 758 1160 667M740 683v24"/>
    </g>
    <g fill="none" stroke="#fff">
      <path d="M678.500 669v32M890.500 669v132l-4 2 8-4-4 4v20M972.500 702v121M952 816Q1052 810 1122 754L1187 693M1042 669l106 111M1146 653l66 67M1146 663l60 63M1101 749l-10-24M1086 703h10l-5 6z"/>
      <path d="M1268 776l-51 46M1264 778l-49 44M1146 643l20 8 20-18"/>
      <circle cx="648" cy="677" r="11"/><circle cx="741" cy="718" r="11"/><circle cx="859" cy="692" r="11"/><circle cx="1177" cy="640" r="13"/>
    </g>
    <g fill="none" stroke="#c85a5a">
      <path d="M953 761h45Q1070 747 1137 669M1120 669l70 75M988 693l27 130"/>
    </g>
    <g fill="none" stroke="#f00">
      <path d="M953 796Q1045 798 1107 743L1172 682M1038 672l109 118M1050 700l87 98M1137 669l65 68M1010 728l25 95"/>
    </g>
    <g fill="none" stroke="#0f0">
      <path d="M1146 577l6-5 101 107 9 9M1253 679l-40 38M1260 687l-40 37M952 784Q1035 790 1102 733L1166 672M1042 705l35 39M1055 758l13 31M1060 802l8 21M1018 693l9 21M1003 730l12 42M938.500 690v133M932 703h17M935 776h12M872.500 669v154M872 691.500h13M660 669v8M747 695v-12M738 695h12M1167 762l22-16M1180 745l10 12"/>
      <circle cx="1012" cy="809" r="2"/><circle cx="1030" cy="805" r="2"/><circle cx="1108" cy="766" r="2"/><circle cx="1118" cy="758" r="2"/><circle cx="1163" cy="715" r="2"/><circle cx="1173" cy="706" r="2"/><circle cx="1187" cy="693" r="1"/>
    </g>
    <path d="M947 689.500h12v13h-12zM734 669h13v13h-13z" fill="none" stroke="#0ff"/>
    <g class="cad bold" font-size="8">
      <text transform="translate(735 717) rotate(45)" font-size="11">18</text><text transform="translate(858 698) rotate(-45)" font-size="11">D</text><text transform="translate(644 678) rotate(45)" font-size="9">4</text>
      <text x="738" y="694">100</text><text transform="translate(871 789) rotate(-90)">600</text>
      <text transform="translate(936 704) rotate(-90)">60</text><text transform="translate(936 746) rotate(-90)">540</text><text transform="translate(936 820) rotate(-90)">300</text>
      <text transform="translate(1052 700) rotate(47)">坡道附加1200</text><text transform="translate(1100 772) rotate(50)">坡道附加12</text>
      <text transform="translate(1020 748) rotate(75)">坡道附加</text><text transform="translate(1015 803) rotate(78)">附加</text>
      <text transform="translate(1105 706) rotate(-45)">(1400)</text><text transform="translate(1134 732) rotate(-45)">(1100)</text><text transform="translate(1096 694) rotate(-55)">i=3%</text>
      <text transform="translate(1053 730) rotate(45)">500</text><text transform="translate(1003 750) rotate(70)">500</text><text transform="translate(1018 706) rotate(65)">280</text>
      <text transform="translate(1058 780) rotate(65)">280</text><text transform="translate(1058 806) rotate(65)">28</text><text x="957" y="782">140</text><text x="1038" y="782">1000</text>
      <text transform="translate(1197 631) rotate(45)">380</text><text x="1251" y="688">90</text><text x="1174" y="750">50</text><text x="1188" y="766">50</text><text x="1174" y="637">7</text><text transform="translate(1111 676) rotate(45)">60</text>
    </g>
    <text class="cad" transform="translate(1192 819) rotate(-45)" font-size="13">布置图</text>

    <!-- Axis marker -->
    <path d="M596 773v-22" stroke="#0f0" stroke-width="4"/><path d="M591 755l5-12 5 12z" fill="#0f0"/>
    <path d="M596 773h20" stroke="#f00" stroke-width="4"/><path d="M614 768l11 5-11 5z" fill="#f00"/>
    <circle cx="596" cy="773" r="5" fill="#0000b8"/>
    <text class="ax" x="591" y="742" fill="#0f0">Y</text><text class="ax" x="627" y="778" fill="#f00">X</text>
  </svg>
</main>

<footer class="status">
  <span class="st-xy">= 93294 Y = 35155</span>
  <span class="st-h">层高： 6.75</span>
  <span class="st-e">标高: -6.8~-0.05</span>
  <span class="st-n">0</span>
  <span class="st-hid">隐藏： 0</span>
  <button aria-label="正交"><svg class="ic"><use href="#s-ortho"/></svg></button>
  <button class="on" aria-label="捕捉"><svg class="ic"><use href="#s-box"/></svg><i class="arrow"></i></button>
  <button class="dim" aria-label="交点"><svg class="ic"><use href="#s-cross"/></svg></button>
  <button aria-label="角度"><svg class="ic"><use href="#s-angle"/></svg><i class="arrow"></i></button>
  <button aria-label="动态输入"><svg class="ic"><use href="#s-dyn"/></svg><i class="arrow"></i></button>
  <button class="txt">跨图层选择</button>
  <button class="txt">折线选择</button>
  <span class="hint">在此处添加剪力墙构件的其他特殊设计的钢筋。</span>
</footer>

<div class="dialog" role="dialog" aria-labelledby="dlg-title">
  <div class="dlg-head"><span id="dlg-title">编辑其它钢筋</span><button aria-label="关闭"><svg width="8" height="8" viewBox="0 0 8 8"><path d="M0 0l8 8M8 0L0 8" stroke="#fff" stroke-width="1.500"/></svg></button></div>
  <div class="dlg-body">
    <div class="dlg-label">其它钢筋列表：</div>
    <div class="sheet">
      <table>
        <colgroup><col class="d-no"><col class="d-info"><col class="d-fig"><col class="d-shape"><col class="d-len"><col class="d-type"><col></colgroup>
        <thead><tr><th class="blank"></th><th class="hot">钢筋信息</th><th>图号</th><th>钢筋图形</th><th>长度(mm)</th><th>加强筋类型</th><th class="rest"></th></tr></thead>
        <tbody>
          <tr class="r1"><th class="hot">1</th><td class="focus">4Φ25</td><td>1</td><td class="shape"><span>L</span></td><td>0</td><td>水平加强筋</td><td class="rest"></td></tr>
          <tr class="r2"><th>2</th><td></td><td></td><td></td><td></td><td></td><td class="rest"></td></tr>
        </tbody>
      </table>
      <div class="gutter"></div>
      <div class="hbar"><i></i></div>
    </div>
    <div class="dlg-foot">
      <button>插入</button><button>删除</button>
      <span class="space"></span>
      <button class="ok">确定</button><button>取消</button>
    </div>
  </div>
  <svg class="sizer" width="10" height="10"><path d="M7 0h2v2H7zM4 3h2v2H4zM7 3h2v2H7zM1 6h2v2H1zM4 6h2v2H4zM7 6h2v2H7z" fill="#889"/></svg>
</div>

<!-- Pointer arrows over the window -->
<svg class="marks">
  <path d="M454 418L433 480 415 529 372 673 366 672 370 690 382 677 378 676 422 529 436 480 454 423z" fill="#fb3b3b"/>
  <path d="M844 412L841 432 847 430 873 518 854 428 857 427z" fill="#fb3b3b"/>
</svg>

</body>
</html>
```
FILE: styles.css
```css
* { box-sizing: border-box; }

body {
  margin: 0;
  height: 100vh;
  display: flex;
  flex-direction: column;
  overflow: hidden;
  position: relative;
  background: #fff;
  color: #000;
  font: 12px/16px "Noto Sans", "Noto Sans CJK SC", sans-serif;
}

button, input, select { font: inherit; color: inherit; }
button { border: 0; padding: 0; background: none; white-space: nowrap; }
ul { list-style: none; margin: 0; padding: 0; }
.sprite { position: absolute; width: 0; height: 0; }
.ic { width: 16px; height: 16px; flex: none; }
.ic30 { width: 30px; height: 30px; flex: none; }

.arrow {
  flex: none;
  width: 0;
  border: 3px solid transparent;
  border-top: 4px solid #555;
  border-bottom: 0;
}
.arrow.pale { border-top-color: #bbb; }
.arrow.dark { border-width: 4px 4px 0; border-top-color: #333; }

/* title and tabs */
.top { display: flex; flex: none; height: 34px; }
.logo {
  width: 35px;
  flex: none;
  padding-top: 1px;
  border-right: 1px solid #d5d5d5;
  position: relative;
}
.corner {
  position: absolute;
  right: 4px;
  bottom: 1px;
  border: 2px solid #777;
  border-top-color: transparent;
  border-left-color: transparent;
}
.top-main { flex: 1; min-width: 0; border-bottom: 1px solid #d0d3d6; overflow: hidden; }
.titlebar { display: flex; align-items: center; height: 22px; margin-top: -7px; }
.quick { display: flex; align-items: center; gap: 7px; width: 477px; padding: 0 0 4px 8px; flex: none; }
.drop { display: flex; align-items: center; gap: 2px; }
.title { white-space: nowrap; }
.tabs { display: flex; padding-left: 3px; height: 19px; }
.tabs button { padding: 0 13px; color: #333; }
.tabs .active { background: #57a3f7; color: #fff; }

/* ribbon */
.ribbon {
  display: flex;
  flex: none;
  height: 98px;
  padding: 2px 0 4px;
  background: linear-gradient(#fff 40%, #e6e9eb);
  border-bottom: 2px solid #8b9097;
}
.group { flex: none; display: flex; flex-direction: column; border-right: 1px solid #cfcfcf; }
.g-select { width: 135px; }
.g-cad { width: 91px; }
.g-common { width: 276px; }
.g-modify { width: 237px; }
.g-draw { width: 119px; }
.g-ident { width: 162px; }
.g-second { width: 220px; }
.cmds { display: flex; gap: 11px; height: 72px; padding: 1px 0 0 9px; }
.col { display: flex; flex-direction: column; }
.col button { display: flex; align-items: center; gap: 3px; height: 23px; }
.col .arrow { margin-left: 3px; }
.cmds button:disabled { color: #aaa; }
.big { display: flex; flex-direction: column; align-items: center; line-height: 17px; padding-top: 4px; }
.big .ic30 { margin-bottom: 4px; }
.big .arrow { margin-top: 5px; }
.big.on { width: 37px; padding: 2px 6px 0 0; margin: 2px 0; background: #c7d8f0; }
.caption { flex: 1; display: flex; align-items: center; justify-content: center; gap: 6px; padding-top: 2px; }
.caption .arrow { border-width: 4px 4px 0; }
.low .caption { padding-top: 6px; }
.g-select .cmds { gap: 5px; padding-left: 0; }
.g-common .cmds { gap: 10px; }
.g-draw .cmds { gap: 12px; }
.g-draw .cmds, .g-ident .cmds { padding-left: 10px; }
.g-ident .cmds { gap: 10px; }
.g-second .cmds { gap: 6px; padding-left: 7px; }
.g-second .col + .col { margin-left: 5px; }

.pickers { display: flex; flex: none; gap: 5px; height: 29px; margin-left: -8px; padding: 3px 0; background: #c9ccd1; border-bottom: 1px solid #8b9097; }
.pickers select {
  appearance: none;
  width: 100px;
  height: 22px;
  padding: 1px 3px 0;
  border: 1px solid #aaadb2;
  border-radius: 0;
  background: #fff url("data:image/svg+xml,%3Csvg xmlns='http://www.w3.org/2000/svg' width='6' height='4'%3E%3Cpath d='M0 0h6L3 4z' fill='%23555'/%3E%3C/svg%3E") no-repeat right 4px center;
}

/* work area */
.work { display: flex; flex: 1; min-height: 0; }
.nav { width: 159px; flex: none; border-right: 1px solid #c4c6cb; position: relative; overflow: hidden; border-bottom: 1px solid #c4c6cb; }
.nav-head { display: flex; gap: 4px; height: 28px; padding: 1px 3px 2px 0; background: #efefef; border-bottom: 1px solid #c4c6cb; }
.plus { flex: 1; color: #2f7fd6; font-weight: bold; line-height: 20px; }
.nav-head button { width: 25px; height: 24px; padding: 3px; border: 1px solid #57a3f7; border-radius: 3px; background: #e6f2fe; }
.types { padding-top: 4px; }
.types li { display: flex; align-items: center; gap: 6px; height: 21px; margin: 1px 17px 3px 10px; padding-left: 4px; white-space: nowrap; }
.types .cat { margin-left: 0; padding: 0; gap: 4px; }
.types .cat .ic { margin-left: -6px; }
.types .on { background: #c9d9f0; }
.thumb { position: absolute; right: 4px; top: 43px; width: 9px; height: 161px; border-radius: 5px; background: #ccc; }

.middle { width: 379px; flex: none; margin: 0 4px; display: flex; flex-direction: column; gap: 5px; }
.panel { border: 1px solid #c4c6cb; border-top: 0; display: flex; flex-direction: column; min-height: 0; }
.list { height: 330px; flex: none; }
.props { flex: 1; }
.grip { flex: none; display: flex; justify-content: flex-end; height: 12px; padding-right: 5px; background: #d3d5dc; border-bottom: 1px solid #c4c6cb; }
.grip button { display: flex; align-items: center; }
.ptabs { flex: none; display: flex; height: 22px; background: #efefef; border-bottom: 1px solid #c4c6cb; }
.ptabs button { width: 65px; color: #888; background: #dfe0e2; border-right: 1px solid #c4c6cb; }
.ptabs .active { color: #333; font-weight: bold; background: #efefef; }
.ptools { flex: none; display: flex; align-items: center; gap: 15px; height: 30px; padding-left: 4px; background: #efefef; border-bottom: 1px solid #c4c6cb; color: #333; }
.ptools button { display: flex; align-items: center; gap: 3px; }
.ptools .arrow { margin: 0 -4px 0 4px; }
.more { display: flex; margin: 0 1px 0 auto; }
.more i { border: 3px solid transparent; border-left: 4px solid #555; border-right: 0; }
.search { flex: none; display: flex; align-items: center; height: 19px; padding-right: 5px; border-bottom: 1px solid #c4c6cb; }
.search input { flex: 1; border: 0; padding: 0 1px; height: 18px; outline: 0; }
.search input::placeholder { color: #888; opacity: 1; }
.members li { height: 21px; padding-left: 40px; line-height: 21px; }
.members span { display: inline-block; padding: 0 4px; }
.members .on { background: #c9d9f0; padding-right: 16px; }
.members .root { display: flex; align-items: center; gap: 9px; padding-left: 9px; }
.fold { border: 3px solid #222; border-top-color: transparent; border-left-color: transparent; }

.prop-body { display: flex; flex: 1; min-height: 0; overflow: hidden; }
table { border-collapse: separate; border-spacing: 0; table-layout: fixed; }
.ptable { width: 362px; flex: none; align-self: flex-start; }
.c-no { width: 22px; }
.c-name { width: 162px; }
.c-val { width: 139px; }
.c-chk { width: 39px; }
.ptable th, .ptable td { height: 21px; padding: 0 3px 0 2px; border: solid #c4c6cb; border-width: 0 1px 1px 0; white-space: nowrap; line-height: 18px; }
.ptable thead th { height: 20px; }
.ptable th { padding: 0; background: #efefef; color: #444; font-weight: normal; }
.ptable td { overflow: hidden; text-align: left; }
.ptable td:nth-child(3) { padding-left: 3px; }
.ptable td:nth-child(4) { padding: 0; text-align: center; }
.ptable .blank { background: #fff; }
.ptable .hot, .cur th { background: #80bbfa; border-color: #62a5ea; color: #fff; font-weight: bold; }
.ptable .cur th { background: #80bbfa; color: #fff; font-weight: bold; }
.sect td:nth-child(3) { background: #e9e9e9; }
.minus { display: inline-block; vertical-align: middle; width: 13px; height: 13px; margin: 0 6px 0 -1px; border: 1px solid #888; border-radius: 2px; background: linear-gradient(#333, #333) center / 7px 1px no-repeat #fff; }
.sub td:nth-child(2) {
  padding-left: 30px;
  background:
    linear-gradient(#c4c6cb, #c4c6cb) 8px 0 / 1px 100% no-repeat,
    linear-gradient(#c4c6cb, #c4c6cb) 8px 50% / 18px 1px no-repeat;
}
.cur td:nth-child(2) { color: #1a62ff; }
.ptable .edit { padding: 0; border: 2px solid #5ea4ea; }
.edit div { display: flex; align-items: center; padding-right: 2px; }
.edit input { flex: 1; min-width: 0; height: 17px; border: 0; padding: 0 3px; outline: 0; }
.edit button { display: flex; align-items: center; justify-content: center; gap: 1px; width: 16px; height: 13px; border: 1px solid #4a95e0; border-radius: 2px; background: #eaf4fe; }
.edit i { width: 2px; height: 2px; background: #5ea4ea; }
.ptable input[type=checkbox] { appearance: none; display: block; width: 14px; height: 14px; margin: 0 auto 2px; border: 1px solid #777; border-radius: 3px; background: #fff; }
.vbar { flex: 1; display: flex; flex-direction: column; align-items: center; padding-bottom: 3px; }
.vthumb { flex: 1; width: 9px; margin-bottom: 58px; border-radius: 5px; background: #ccc; }

.canvas { flex: 1; min-width: 0; height: 100%; background: #000; }
.cad { fill: #fff; font-family: "Liberation Sans", "Noto Sans CJK SC", sans-serif; }
.bold { font-weight: bold; }
.ax { font: 14px "Liberation Sans", sans-serif; }

/* status bar */
.status { flex: none; display: flex; align-items: center; gap: 3px; height: 28px; padding-top: 2px; background: #dedee0; color: #222; white-space: nowrap; }
.status span { padding-left: 4px; }
.st-xy { width: 187px; }
.st-h { width: 80px; }
.st-e { width: 130px; }
.st-n { width: 100px; }
.st-hid { width: 81px; }
.status button { display: flex; align-items: center; gap: 5px; height: 25px; padding: 0 4px; border: 1px solid #999; background: #d0d0d2; }
.status .txt { padding: 0 5px; }
.status .ic { width: 15px; height: 15px; }
.status .on { border-color: #2f8ff0; background: #fff; }
.status .dim { border-color: #aaa; }
.status .hint { padding-left: 2px; }

/* dialog */
.dialog { position: absolute; left: 454px; top: 309px; width: 692px; display: flex; flex-direction: column; background: #efefef; border: 1px solid #b9c3d3; border-top: 0; }
.dlg-head { display: flex; align-items: center; justify-content: space-between; height: 27px; margin: 0 -1px; padding: 0 10px 0 8px; background: #2d7fe2; color: #fff; }
.dlg-head button { display: flex; }
.dlg-body { padding: 12px 11px 11px; }
.dlg-label { line-height: 16px; margin-bottom: 6px; }
.sheet { display: flex; flex-direction: column; height: 255px; background: #fff; border: 1px solid #c4c6cb; }
.sheet table { width: 100%; flex: none; }
.d-no { width: 22px; }
.d-info { width: 81px; }
.d-fig { width: 65px; }
.d-shape { width: 201px; }
.d-len { width: 101px; }
.d-type { width: 121px; }
.sheet th, .sheet td { padding: 0 3px; border: solid #c4c6cb; border-width: 0 1px 1px 0; text-align: left; line-height: 18px; }
.sheet thead th { height: 20px; text-align: center; }
.sheet th { padding: 0; text-align: center; font-weight: normal; color: #333; background: #efefef; }
.sheet .r1 td, .sheet .r1 th { height: 36px; }
.sheet .r2 td, .sheet .r2 th { height: 21px; }
.sheet .blank { background: #fff; border-right: 0; }
.sheet .hot { background: #80bbfa; color: #fff; font-weight: bold; border-color: #62a5ea; }
.sheet .rest { border: 0; }
.sheet .focus { border: solid #5ea4ea; border-width: 0 2px 2px 0; }
.sheet .shape { text-align: center; padding: 0 3px 0 17px; }
.shape span { display: block; border-bottom: 2px solid #000; color: #f00; line-height: 16px; font-family: "Liberation Mono", monospace; padding-right: 12px; }
.gutter { flex: 1; width: 22px; background: #efefef; }
.hbar { height: 15px; padding: 4px 13px 0 119px; }
.hbar i { display: block; height: 8px; border-radius: 4px; background: #ccc; }
.dlg-foot { display: flex; gap: 6px; padding-top: 6px; }
.dlg-foot .space { flex: 1; }
.dlg-foot button { width: 80px; height: 26px; border: 1px solid #c0c6d4; border-radius: 3px; background: #fafafa; color: #222; }
.dlg-foot .ok { background: #2d7fe2; border-color: #2d7fe2; color: #fff; }
.sizer { position: absolute; right: 1px; bottom: 1px; }

.marks { position: absolute; left: 0; top: 0; width: 100%; height: 100%; pointer-events: none; }
```
